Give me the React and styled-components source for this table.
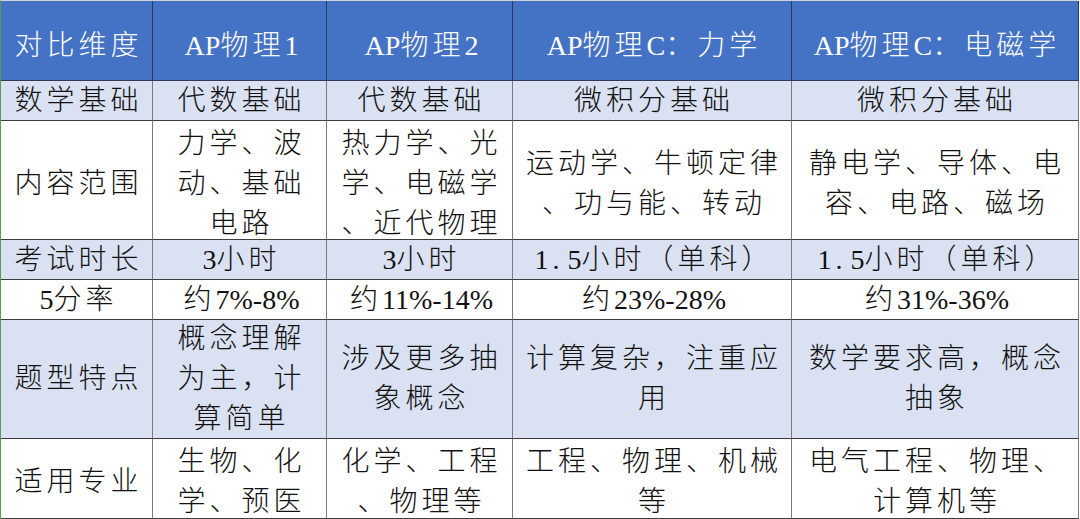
import React from "react";
import styled, { createGlobalStyle } from "styled-components";

const GlobalStyle = createGlobalStyle`
  html, body {
    margin: 0;
    padding: 0;
    background: #ffffff;
  }
  * {
    box-sizing: border-box;
  }
`;

const Table = styled.div`
  display: grid;
  grid-template-columns: 152px 174px 186px 279px 287px;
  grid-template-rows: 80px 40px 119px 40px 40px 119px 80px;
  width: 1078px;
  border-top: 1px solid #d0d4da;
  border-left: 1px solid #5b9a52;
  font-family: "Liberation Serif", "Noto Sans CJK SC", serif;
  font-size: 28px;
  font-weight: 300;
  letter-spacing: 4px;
`;

const HeadCell = styled.div`
  display: flex;
  align-items: center;
  justify-content: center;
  padding-top: 4px;
  background: #4472c4;
  color: #ffffff;
  border-right: 1px solid #2c3b58;
  border-bottom: 1px solid #2c3b58;
  white-space: nowrap;
`;

const Cell = styled.div`
  display: flex;
  flex-direction: column;
  align-items: center;
  justify-content: center;
  padding-top: ${(p) => p.$shift || 0}px;
  background: ${(p) => (p.$shade ? "#d9e1f2" : "#ffffff")};
  color: #111111;
  border-right: 1px solid #7b7b7b;
  border-bottom: 1px solid #3d3d3d;
  line-height: 40px;
`;

const Line = styled.span`
  display: block;
  white-space: nowrap;
  margin-right: -4px;
`;

// latin runs sit tight, only the CJK glyphs (and the decimal point) are spaced out
const Latin = styled.span`
  letter-spacing: 0;
  font-weight: 400;
`;

const Dot = styled.span`
  font-weight: 400;
  letter-spacing: 8px;
  margin-left: 4px;
`;

const renderText = (text) =>
  text.split(/([A-Za-z0-9%\-]+|\.)/).map((part, i) => {
    if (part === ".") return <Dot key={i}>.</Dot>;
    return /^[A-Za-z0-9%\-]+$/.test(part) ? <Latin key={i}>{part}</Latin> : part;
  });

const headers = ["对比维度", "AP物理1", "AP物理2", "AP物理C：力学", "AP物理C：电磁学"];

const rows = [
  {
    shade: true,
    cells: [["数学基础"], ["代数基础"], ["代数基础"], ["微积分基础"], ["微积分基础"]],
  },
  {
    shade: false,
    shift: 8,
    cells: [
      ["内容范围"],
      ["力学、波", "动、基础", "电路"],
      ["热力学、光", "学、电磁学", "、近代物理"],
      ["运动学、牛顿定律", "、功与能、转动"],
      ["静电学、导体、电", "容、电路、磁场"],
    ],
  },
  {
    shade: true,
    cells: [["考试时长"], ["3小时"], ["3小时"], ["1.5小时（单科）"], ["1.5小时（单科）"]],
  },
  {
    shade: false,
    cells: [["5分率"], ["约7%-8%"], ["约11%-14%"], ["约23%-28%"], ["约31%-36%"]],
  },
  {
    shade: true,
    cells: [
      ["题型特点"],
      ["概念理解", "为主，计", "算简单"],
      ["涉及更多抽", "象概念"],
      ["计算复杂，注重应", "用"],
      ["数学要求高，概念", "抽象"],
    ],
  },
  {
    shade: false,
    shift: 6,
    cells: [
      ["适用专业"],
      ["生物、化", "学、预医"],
      ["化学、工程", "、物理等"],
      ["工程、物理、机械", "等"],
      ["电气工程、物理、", "计算机等"],
    ],
  },
];

export default function App() {
  return (
    <>
      <GlobalStyle />
      <Table>
        {headers.map((h) => (
          <HeadCell key={h}>
            <Line>{renderText(h)}</Line>
          </HeadCell>
        ))}
        {rows.map((row, r) =>
          row.cells.map((lines, c) => (
            <Cell key={`${r}-${c}`} $shade={row.shade} $shift={row.shift}>
              {lines.map((t, i) => (
                <Line key={i}>{renderText(t)}</Line>
              ))}
            </Cell>
          ))
        )}
      </Table>
    </>
  );
}
